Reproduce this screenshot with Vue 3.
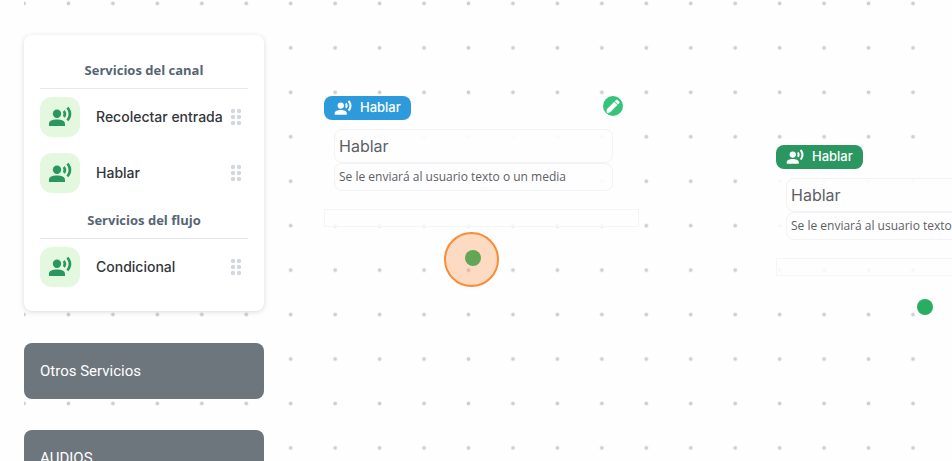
<script setup>
import { h } from 'vue'

const groups = [
  { title: 'Servicios del canal', items: ['Recolectar entrada', 'Hablar'] },
  { title: 'Servicios del flujo', items: ['Condicional'] },
]
const sections = ['Otros Servicios', 'AUDIOS']
const nodes = [
  { id: 'a', tone: 'blue', selected: true, x: 324, y: 96 },
  { id: 'b', tone: 'green', selected: false, x: 776, y: 145 },
]

const VoiceIcon = () =>
  h('svg', { viewBox: '0 0 24 24', fill: 'currentColor', 'aria-hidden': 'true' }, [
    h('circle', { cx: 9, cy: 8.8, r: 4.2 }),
    h('path', {
      d: 'M9 14.6c-4.2 0-8 1.1-8 4.2V21h16v-2.2c0-3.1-3.8-4.2-8-4.2z',
    }),
    h('path', {
      d: 'M16.6 5l-1.8 1.9c.9 1.1.9 2.8 0 3.9l1.8 1.9c2.2-2.1 2.2-5.4 0-7.7zM20.3 1.8l-1.9 1.8c2.8 3 2.8 7.6 0 10.8l1.9 1.8c4-3.9 4-10.3 0-14.4z',
    }),
  ])
</script>

<template>
  <main class="board">
    <svg class="grid" aria-hidden="true">
      <defs>
        <pattern id="dots" width="44.45" height="44.45" patternUnits="userSpaceOnUse" patternTransform="translate(-22.2 -18.8)">
          <circle cx="22.2" cy="22.2" r="1.9" fill="#cdd0d3" />
        </pattern>
      </defs>
      <rect width="100%" height="100%" fill="url(#dots)" />
    </svg>

    <aside class="sidebar">
      <div class="card">
        <section v-for="g in groups" :key="g.title">
          <h2>{{ g.title }}</h2>
          <ul>
            <li v-for="item in g.items" :key="item">
              <span class="tile"><VoiceIcon class="voice" /></span>
              <span class="name">{{ item }}</span>
              <svg class="grip" viewBox="0 0 12 18" aria-hidden="true">
                <template v-for="y in [3, 9, 15]" :key="y">
                  <circle cx="3" :cy="y" r="2.2" />
                  <circle cx="9" :cy="y" r="2.2" />
                </template>
              </svg>
            </li>
          </ul>
        </section>
      </div>
      <button v-for="s in sections" :key="s" type="button" class="section">{{ s }}</button>
    </aside>

    <article v-for="n in nodes" :key="n.id" class="node" :style="{ left: n.x + 'px', top: n.y + 'px' }">
      <header>
        <span class="badge" :class="n.tone"><VoiceIcon class="voice" /><span class="label">Hablar</span></span>
        <button v-if="n.selected" type="button" class="edit" aria-label="Editar">
          <svg viewBox="0 0 20 20" aria-hidden="true">
            <path d="M4 13.2l7.3-7.3 3 3L7 16.2l-2.3.5q-1 .2-.9-.9zM12 5.2l1-1q.8-.8 1.6 0l1.4 1.4q.8.8 0 1.6l-1 1z" fill="#fff" stroke="#fff" stroke-width=".4" />
          </svg>
        </button>
      </header>
      <div class="body">
        <div class="fields">
          <input class="title" type="text" value="Hablar" aria-label="Nombre" />
          <input class="desc" type="text" value="Se le enviará al usuario texto o un media" aria-label="Descripción" />
        </div>
        <div class="slot"></div>
      </div>
      <span v-if="n.selected" class="halo"></span>
      <span class="port" :class="{ active: n.selected }"></span>
    </article>
  </main>
</template>

<style>
body {
  background: #fefefe;
}
</style>

<style scoped>
* {
  box-sizing: border-box;
}
.board {
  position: relative;
  height: 100vh;
  overflow: hidden;
  padding: 35px 24px 0;
  font-family: Inter, Roboto, sans-serif;
}
.grid {
  position: absolute;
  inset: 0 0 0 24px;
  width: calc(100% - 24px);
  height: 100%;
}
.sidebar {
  position: relative;
  width: 240px;
}
.card {
  padding: 24px 16px 16px;
  margin-bottom: 32px;
  border-radius: 8px;
  background: #fff;
  box-shadow: 0 1px 5px rgba(60, 75, 90, 0.2);
}
h2 {
  margin: 0;
  height: 30px;
  border-bottom: 1px solid #e6e8ea;
  color: #566573;
  font: 700 13px/22px "Open Sans", "Noto Sans", sans-serif;
  text-align: center;
}
ul {
  list-style: none;
  margin: 0;
  padding: 0;
}
li {
  display: flex;
  align-items: center;
  height: 56px;
  padding-right: 6px;
}
section + section h2 {
  margin-top: 8px;
}
.tile {
  display: grid;
  place-items: center;
  width: 40px;
  height: 40px;
  margin-right: 16px;
  border-radius: 12px;
  background: #e3f8de;
  color: #2a9760;
}
.tile .voice {
  width: 24px;
  height: 24px;
}
.name {
  flex: 1;
  padding-bottom: 2px;
  color: #33363b;
  font-size: 14px;
  font-weight: 500;
  white-space: nowrap;
}
.grip {
  width: 12px;
  height: 18px;
  fill: #d2d8dd;
}
.section {
  display: block;
  width: 100%;
  height: 56px;
  margin-bottom: 31px;
  padding: 0 16px;
  border: 0;
  border-radius: 8px;
  background: #6d757d;
  color: #fff;
  font: 400 15px/20px Roboto, sans-serif;
  text-align: left;
}
.node {
  position: absolute;
  width: 315px;
}
header {
  display: flex;
  justify-content: space-between;
  padding-right: 16px;
}
.badge {
  display: flex;
  align-items: center;
  gap: 8px;
  height: 24px;
  padding: 0 10px;
  border-radius: 8px;
  color: #fff;
  font-size: 13px;
  font-weight: 500;
}
.label {
  padding-bottom: 2px;
}
.badge .voice {
  width: 18px;
  height: 18px;
}
.blue {
  background: #2d9bdb;
}
.green {
  background: #2a9760;
}
.edit {
  width: 20px;
  height: 20px;
  padding: 0;
  border: 0;
  border-radius: 50%;
  background: #36c47c;
}
.edit svg {
  display: block;
}
.body {
  padding-top: 9px;
  background: rgba(254, 254, 254, 0.85);
}
.fields {
  display: flex;
  flex-direction: column;
  padding: 0 26px 0 10px;
}
input {
  width: 100%;
  padding: 0 4px;
  border: 1px solid #f2f3f4;
  border-radius: 8px;
  background: rgba(254, 254, 254, 0.5);
  color: #5c6066;
  font-family: inherit;
}
.title {
  height: 34px;
  font-size: 16px;
}
.desc {
  height: 28px;
  padding-bottom: 2px;
  font-family: "Open Sans", sans-serif;
  font-size: 12px;
}
.slot {
  height: 18px;
  margin-top: 18px;
  border: 1px solid #f4f5f6;
}
.port {
  position: absolute;
  left: 141px;
  top: 154px;
  width: 16px;
  height: 16px;
  border-radius: 50%;
  background: #29ad61;
}
.port.active {
  background: #65a656;
}
.halo {
  position: absolute;
  left: 120px;
  top: 136px;
  width: 55px;
  height: 55px;
  border: 2px solid #fb8c35;
  border-radius: 50%;
  background: rgba(253, 140, 55, 0.3);
}
</style>
